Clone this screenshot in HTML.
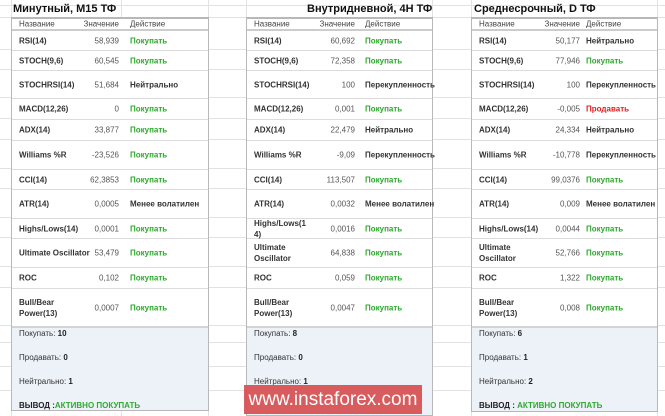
<!DOCTYPE html><html><head><meta charset="utf-8"><style>
*{margin:0;padding:0;box-sizing:border-box}
body{width:665px;height:416px;background:#fff;position:relative;overflow:hidden;font-family:"Liberation Sans","Noto Sans CJK SC",sans-serif;}
.g{position:absolute;background:#e2e2e2}
.t{position:absolute;top:3px;font-weight:bold;font-size:11px;color:#111;white-space:nowrap}
.p{position:absolute;top:17px;border:1px solid #b8b8b8;border-top:2px solid #b8b8b8;background:#fff}
.r{position:absolute;left:0;right:0;border-bottom:1px solid #dcdcdc;font-size:8px;color:#333}
.r span{position:absolute;top:50%;transform:translateY(-50%);white-space:nowrap}
.n{left:7px;font-weight:bold;line-height:11px}
.v{text-align:right;color:#555}
.a{font-weight:bold}
.b{color:#2eaa2e}.s{color:#e02020}
.sum{position:absolute;left:0;right:0;bottom:0;background:#edf2f8;border-top:2px solid #d4d4d4;font-size:8px;color:#333}
.sum div{position:absolute;left:7px;white-space:nowrap}
.sum b{color:#222}
.sum b.b{color:#2eaa2e}
.h{font-weight:normal!important;color:#444}
</style></head><body>
<div class="g" style="left:0;right:0;top:5px;height:1px"></div>
<div class="g" style="left:0;right:0;top:17px;height:1px"></div>
<div class="g" style="left:0;right:0;top:49px;height:1px"></div>
<div class="g" style="left:0;right:0;top:69px;height:1px"></div>
<div class="g" style="left:0;right:0;top:97px;height:1px"></div>
<div class="g" style="left:0;right:0;top:118px;height:1px"></div>
<div class="g" style="left:0;right:0;top:139px;height:1px"></div>
<div class="g" style="left:0;right:0;top:168px;height:1px"></div>
<div class="g" style="left:0;right:0;top:188px;height:1px"></div>
<div class="g" style="left:0;right:0;top:217px;height:1px"></div>
<div class="g" style="left:0;right:0;top:237px;height:1px"></div>
<div class="g" style="left:0;right:0;top:266px;height:1px"></div>
<div class="g" style="left:0;right:0;top:287px;height:1px"></div>
<div class="g" style="left:0;right:0;top:325px;height:1px"></div>
<div class="g" style="left:0;right:0;top:342px;height:1px"></div>
<div class="g" style="left:0;right:0;top:366px;height:1px"></div>
<div class="g" style="left:0;right:0;top:390px;height:1px"></div>
<div class="g" style="top:0;bottom:0;left:11px;width:1px"></div>
<div class="g" style="top:0;bottom:0;left:121px;width:1px"></div>
<div class="g" style="top:0;bottom:0;left:208px;width:1px"></div>
<div class="g" style="top:0;bottom:0;left:246px;width:1px"></div>
<div class="g" style="top:0;bottom:0;left:432px;width:1px"></div>
<div class="g" style="top:0;bottom:0;left:471px;width:1px"></div>
<div class="g" style="top:0;bottom:0;left:657px;width:1px"></div>

<div class="t" style="left:13px">Минутный, M15 ТФ</div>
<div class="t" style="left:307px">Внутридневной, 4H ТФ</div>
<div class="t" style="left:474px">Среднесрочный, D ТФ</div>

<!-- panel 1 -->
<div class="p" style="left:11px;width:198px;height:394px">
<div class="r" style="top:0;height:12px;border-bottom:2px solid #ccc"><span class="n h">Название</span><span class="v h" style="right:89px">Значение</span><span class="h" style="left:118px">Действие</span></div>
<div class="r" style="top:12px;height:20px"><span class="n">RSI(14)</span><span class="v" style="right:89px">58,939</span><span class="a b" style="left:118px">Покупать</span></div>
<div class="r" style="top:32px;height:20px"><span class="n">STOCH(9,6)</span><span class="v" style="right:89px">60,545</span><span class="a b" style="left:118px">Покупать</span></div>
<div class="r" style="top:52px;height:28px"><span class="n">STOCHRSI(14)</span><span class="v" style="right:89px">51,684</span><span class="a" style="left:118px">Нейтрально</span></div>
<div class="r" style="top:80px;height:21px"><span class="n">MACD(12,26)</span><span class="v" style="right:89px">0</span><span class="a b" style="left:118px">Покупать</span></div>
<div class="r" style="top:101px;height:21px"><span class="n">ADX(14)</span><span class="v" style="right:89px">33,877</span><span class="a b" style="left:118px">Покупать</span></div>
<div class="r" style="top:122px;height:29px"><span class="n">Williams %R</span><span class="v" style="right:89px">-23,526</span><span class="a b" style="left:118px">Покупать</span></div>
<div class="r" style="top:151px;height:20px"><span class="n">CCI(14)</span><span class="v" style="right:89px">62,3853</span><span class="a b" style="left:118px">Покупать</span></div>
<div class="r" style="top:171px;height:29px"><span class="n">ATR(14)</span><span class="v" style="right:89px">0,0005</span><span class="a" style="left:118px">Менее волатилен</span></div>
<div class="r" style="top:200px;height:20px"><span class="n">Highs/Lows(14)</span><span class="v" style="right:89px">0,0001</span><span class="a b" style="left:118px">Покупать</span></div>
<div class="r" style="top:220px;height:29px"><span class="n">Ultimate Oscillator</span><span class="v" style="right:89px">53,479</span><span class="a b" style="left:118px">Покупать</span></div>
<div class="r" style="top:249px;height:21px"><span class="n">ROC</span><span class="v" style="right:89px">0,102</span><span class="a b" style="left:118px">Покупать</span></div>
<div class="r" style="top:270px;height:38px"><span class="n">Bull/Bear<br>Power(13)</span><span class="v" style="right:89px">0,0007</span><span class="a b" style="left:118px">Покупать</span></div>
<div class="sum" style="height:84px"><div style="top:1px">Покупать: <b>10</b></div><div style="top:25px">Продавать: <b>0</b></div><div style="top:49px">Нейтрально: <b>1</b></div><div style="top:73px"><b>ВЫВОД :</b><b class="b">АКТИВНО ПОКУПАТЬ</b></div></div>
</div>

<!-- panel 2 -->
<div class="p" style="left:246px;width:187px;height:399px">
<div class="r" style="top:0;height:12px;border-bottom:2px solid #ccc"><span class="n h">Название</span><span class="v h" style="right:77px">Значение</span><span class="h" style="left:118px">Действие</span></div>
<div class="r" style="top:12px;height:20px"><span class="n">RSI(14)</span><span class="v" style="right:77px">60,692</span><span class="a b" style="left:118px">Покупать</span></div>
<div class="r" style="top:32px;height:20px"><span class="n">STOCH(9,6)</span><span class="v" style="right:77px">72,358</span><span class="a b" style="left:118px">Покупать</span></div>
<div class="r" style="top:52px;height:28px"><span class="n">STOCHRSI(14)</span><span class="v" style="right:77px">100</span><span class="a" style="left:118px">Перекупленность</span></div>
<div class="r" style="top:80px;height:21px"><span class="n">MACD(12,26)</span><span class="v" style="right:77px">0,001</span><span class="a b" style="left:118px">Покупать</span></div>
<div class="r" style="top:101px;height:21px"><span class="n">ADX(14)</span><span class="v" style="right:77px">22,479</span><span class="a" style="left:118px">Нейтрально</span></div>
<div class="r" style="top:122px;height:29px"><span class="n">Williams %R</span><span class="v" style="right:77px">-9,09</span><span class="a" style="left:118px">Перекупленность</span></div>
<div class="r" style="top:151px;height:20px"><span class="n">CCI(14)</span><span class="v" style="right:77px">113,507</span><span class="a b" style="left:118px">Покупать</span></div>
<div class="r" style="top:171px;height:29px"><span class="n">ATR(14)</span><span class="v" style="right:77px">0,0032</span><span class="a" style="left:118px">Менее волатилен</span></div>
<div class="r" style="top:200px;height:20px"><span class="n">Highs/Lows(1<br>4)</span><span class="v" style="right:77px">0,0016</span><span class="a b" style="left:118px">Покупать</span></div>
<div class="r" style="top:220px;height:29px"><span class="n">Ultimate<br>Oscillator</span><span class="v" style="right:77px">64,838</span><span class="a b" style="left:118px">Покупать</span></div>
<div class="r" style="top:249px;height:21px"><span class="n">ROC</span><span class="v" style="right:77px">0,059</span><span class="a b" style="left:118px">Покупать</span></div>
<div class="r" style="top:270px;height:38px"><span class="n">Bull/Bear<br>Power(13)</span><span class="v" style="right:77px">0,0047</span><span class="a b" style="left:118px">Покупать</span></div>
<div class="sum" style="height:89px"><div style="top:1px">Покупать: <b>8</b></div><div style="top:25px">Продавать: <b>0</b></div><div style="top:49px">Нейтрально: <b>1</b></div></div>
</div>

<!-- panel 3 -->
<div class="p" style="left:471px;width:187px;height:395px">
<div class="r" style="top:0;height:12px;border-bottom:2px solid #ccc"><span class="n h">Название</span><span class="v h" style="right:77px">Значение</span><span class="h" style="left:114px">Действие</span></div>
<div class="r" style="top:12px;height:20px"><span class="n">RSI(14)</span><span class="v" style="right:77px">50,177</span><span class="a" style="left:114px">Нейтрально</span></div>
<div class="r" style="top:32px;height:20px"><span class="n">STOCH(9,6)</span><span class="v" style="right:77px">77,946</span><span class="a b" style="left:114px">Покупать</span></div>
<div class="r" style="top:52px;height:28px"><span class="n">STOCHRSI(14)</span><span class="v" style="right:77px">100</span><span class="a" style="left:114px">Перекупленность</span></div>
<div class="r" style="top:80px;height:21px"><span class="n">MACD(12,26)</span><span class="v" style="right:77px">-0,005</span><span class="a s" style="left:114px">Продавать</span></div>
<div class="r" style="top:101px;height:21px"><span class="n">ADX(14)</span><span class="v" style="right:77px">24,334</span><span class="a" style="left:114px">Нейтрально</span></div>
<div class="r" style="top:122px;height:29px"><span class="n">Williams %R</span><span class="v" style="right:77px">-10,778</span><span class="a" style="left:114px">Перекупленность</span></div>
<div class="r" style="top:151px;height:20px"><span class="n">CCI(14)</span><span class="v" style="right:77px">99,0376</span><span class="a b" style="left:114px">Покупать</span></div>
<div class="r" style="top:171px;height:29px"><span class="n">ATR(14)</span><span class="v" style="right:77px">0,009</span><span class="a" style="left:114px">Менее волатилен</span></div>
<div class="r" style="top:200px;height:20px"><span class="n">Highs/Lows(14)</span><span class="v" style="right:77px">0,0044</span><span class="a b" style="left:114px">Покупать</span></div>
<div class="r" style="top:220px;height:29px"><span class="n">Ultimate<br>Oscillator</span><span class="v" style="right:77px">52,766</span><span class="a b" style="left:114px">Покупать</span></div>
<div class="r" style="top:249px;height:21px"><span class="n">ROC</span><span class="v" style="right:77px">1,322</span><span class="a b" style="left:114px">Покупать</span></div>
<div class="r" style="top:270px;height:38px"><span class="n">Bull/Bear<br>Power(13)</span><span class="v" style="right:77px">0,008</span><span class="a b" style="left:114px">Покупать</span></div>
<div class="sum" style="height:85px"><div style="top:1px">Покупать: <b>6</b></div><div style="top:25px">Продавать: <b>1</b></div><div style="top:49px">Нейтрально: <b>2</b></div><div style="top:73px"><b>ВЫВОД : </b><b class="b">АКТИВНО ПОКУПАТЬ</b></div></div>
</div>

<div style="position:absolute;left:244px;top:385px;width:178px;height:29px;background:rgba(214,78,80,0.92);color:#fff;font-size:19px;line-height:29px;text-align:center;white-space:nowrap">www.instaforex.com</div>
</body></html>
